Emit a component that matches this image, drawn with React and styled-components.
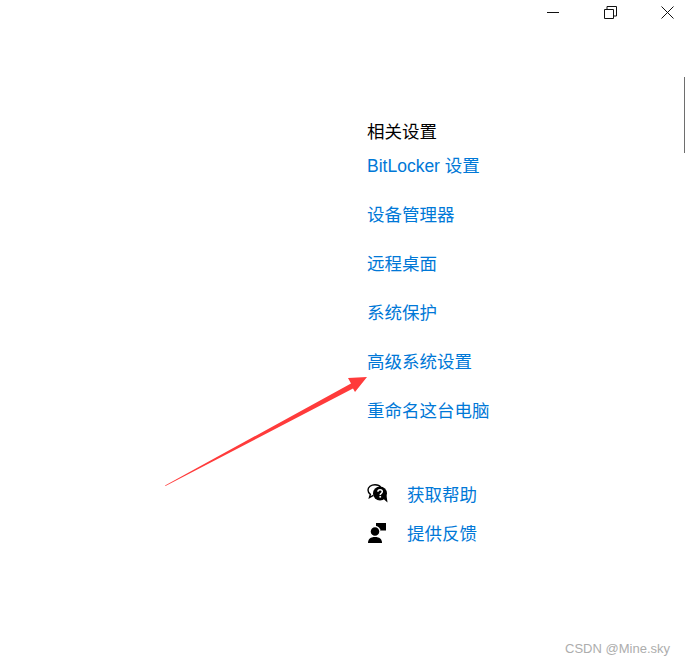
import React from "react";
import styled, { createGlobalStyle } from "styled-components";

const GlobalStyle = createGlobalStyle`
	html, body {
		margin: 0;
		padding: 0;
		background: #fff;
	}
`;

const Page = styled.div`
	position: relative;
	width: 685px;
	height: 665px;
	overflow: hidden;
	background: #fff;
	font-family: "Liberation Sans", "Noto Sans CJK SC", sans-serif;
`;

const TitleBar = styled.div`
	display: flex;
	justify-content: flex-end;
	gap: 44px;
	height: 24px;
	padding-right: 11px;
`;

const WinButton = styled.div`
	display: flex;
	align-items: center;
	justify-content: center;
	width: 13px;
	height: 24px;
`;

const Column = styled.div`
	display: flex;
	flex-direction: column;
	align-items: flex-start;
	padding: 96px 0 0 367px;
`;

const Heading = styled.h2`
	margin: 0;
	font-size: 17.5px;
	font-weight: 400;
	line-height: 24px;
	color: #000;
`;

const SettingsList = styled.div`
	display: flex;
	flex-direction: column;
	gap: 25px;
	margin-top: 10px;
`;

const SettingLink = styled.a`
	font-size: 17.5px;
	line-height: 24px;
	color: #0078d7;
`;

const HelpList = styled.div`
	display: flex;
	flex-direction: column;
	gap: 15px;
	margin-top: 60px;
`;

const HelpRow = styled.div`
	display: flex;
	align-items: center;
	gap: 19px;
`;

const HelpIcon = styled.svg`
	width: 21px;
	height: 22px;
	flex: none;
`;

const Watermark = styled.div`
	position: absolute;
	right: 15px;
	bottom: 9px;
	font-size: 13px;
	line-height: 15px;
	color: #adadad;
`;

const ScrollThumb = styled.div`
	position: absolute;
	top: 77px;
	right: 0;
	width: 1px;
	height: 76px;
	background: #6e6e6e;
`;

const ArrowLayer = styled.svg`
	position: absolute;
	inset: 0;
	pointer-events: none;
`;

const links = ["BitLocker 设置", "设备管理器", "远程桌面", "系统保护", "高级系统设置", "重命名这台电脑"];

const App = () => {
	return (
		<Page>
			<GlobalStyle />
			<TitleBar>
				<WinButton>
					<svg width="13" height="13" viewBox="0 0 13 13"><path d="M0 6.5h12" stroke="#111" fill="none" /></svg>
				</WinButton>
				<WinButton>
					<svg width="13" height="13" viewBox="0 0 13 13" fill="none" stroke="#111"><path d="M.5 3.5h9v9h-9z" /><path d="M3 3.5V.5h9.5v9.500h-3" /></svg>
				</WinButton>
				<WinButton>
					<svg width="13" height="13" viewBox="0 0 13 13" fill="none" stroke="#111"><path d="M.5.5l12 12M12.500.5l-12 12" /></svg>
				</WinButton>
			</TitleBar>
			<Column>
				<Heading>相关设置</Heading>
				<SettingsList>
					{links.map(label => <SettingLink key={label}>{label}</SettingLink>)}
				</SettingsList>
				<HelpList>
					<HelpRow>
						<HelpIcon viewBox="0 0 21 22">
							<path d="M8 .7C4 .7 1 3 1 6c0 2 1 3.400 2.400 4.300L2.500 13.500l3.800-2.200" fill="none" stroke="#000" strokeWidth="1.400" />
							<path d="M8 .7c2.800 0 4.600.8 5.600 2.500" fill="none" stroke="#000" strokeWidth="1.400" />
							<circle cx="13" cy="9.500" r="7" fill="#000" />
							<path d="M16 14.500l4.500 4-1-7z" fill="#000" />
							<path d="M10.900 7.800c0-2.800 4.400-2.800 4.400 0 0 1.500-2.100 1.600-2.100 3.100" fill="none" stroke="#fff" strokeWidth="1.500" />
							<rect x="12.400" y="11.900" width="1.700" height="1.700" fill="#fff" />
						</HelpIcon>
						<SettingLink>获取帮助</SettingLink>
					</HelpRow>
					<HelpRow>
						<HelpIcon viewBox="0 0 21 22">
							<path d="M9 0h10v7.500h-5l-3 2.500V7.500H9z" fill="#000" />
							<circle cx="8" cy="8.500" r="5" fill="#000" stroke="#fff" strokeWidth="1.400" />
							<path d="M1 20c0-4 2.500-6 7-6s7 2 7 6z" fill="#000" />
						</HelpIcon>
						<SettingLink>提供反馈</SettingLink>
					</HelpRow>
				</HelpList>
			</Column>
			<ScrollThumb />
			<ArrowLayer width="685" height="665" viewBox="0 0 685 665">
				<path d="M165 485.500L351 383.500 348 378 367 377 355 392 353 388.500 165.500 486z" fill="#ff3b3b" />
			</ArrowLayer>
			<Watermark>CSDN @Mine.sky</Watermark>
		</Page>
	);
};

export default App;
